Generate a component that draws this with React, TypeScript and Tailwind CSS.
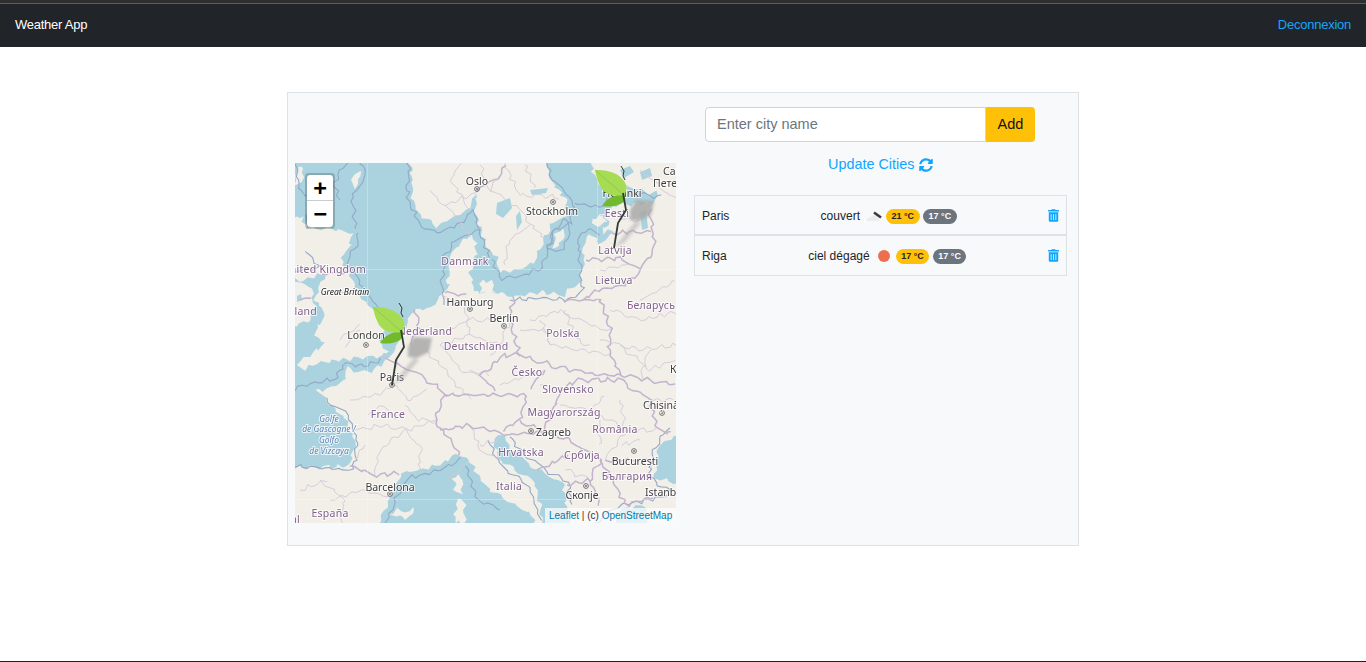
import { FaSyncAlt, FaTrashAlt } from 'react-icons/fa';

const mainland =
  'M280,468 L350,466 L355,443 L345,420 L330,403 L318,392 L313,389 L325,391 L340,383 L345,378 L347,368 L367,373 L380,365 L390,357 L396,345 L401,332 L406,322 L415,310 L432,308 L437,300 L447,290 L450,260 L460,243 L473,235 L477,250 L470,272 L474,292 L497,292 L513,297 L540,292 L563,295 L572,288 L580,285 L584,262 L583,243 L590,233 L600,245 L607,240 L612,233 L606,218 L613,205 L653,203 L657,192 L650,193 L630,187 L603,193 L593,173 L587,150 L690,150 L690,540 L280,540 Z';

const scandinavia =
  'M410,150 L413,200 L423,218 L437,226 L457,217 L472,203 L476,192 L476,215 L487,245 L497,258 L499,272 L520,270 L535,262 L543,240 L550,225 L564,218 L568,204 L560,192 L550,177 L543,150 Z';

const britain =
  'M280,222 L303,216 L306,228 L333,229 L352,233 L351,245 L340,260 L349,272 L358,291 L372,309 L378,318 L384,332 L378,341 L388,350 L380,356 L367,357 L340,360 L315,363 L304,369 L298,364 L312,352 L325,345 L315,335 L318,325 L325,320 L322,310 L315,300 L318,290 L325,280 L322,274 L305,280 L280,278 Z';

const waters = [
  'M373,540 L390,497 L403,473 L420,470 L443,463 L460,453 L470,463 L482,482 L500,497 L530,512 L540,540 Z',
  'M505,435 L510,447 L537,470 L563,483 L567,507 L572,540 L545,540 L540,505 L533,480 L500,460 L493,437 Z',
  'M613,540 L620,510 L645,505 L650,540 Z',
  'M690,433 L665,440 L657,453 L655,477 L690,487 Z',
];

const islands = [
  'M280,284 L305,283 L312,290 L314,305 L310,320 L280,330 Z',
  'M458,473 L463,480 L461,496 L456,494 L454,480 Z',
  'M457,499 L464,500 L465,522 L455,523 Z',
  'M391,514 L398,510 L404,512 L412,509 L414,515 L404,519 Z',
  'M480,283 L492,280 L495,292 L482,292 Z',
  'M553,247 L556,235 L563,226 L565,232 L560,247 Z',
  'M592,219 L604,214 L606,222 L596,226 Z',
  'M352,178 L360,170 L361,178 L354,188 Z',
  'M297,167 L303,170 L301,182 L295,186 Z',
  'M604,228 L612,224 L611,230 L604,233 Z',
];

const lakes = [
  'M497,203 L510,198 L512,208 L503,218 L496,214 Z',
  'M516,216 L520,211 L522,222 L517,230 Z',
  'M530,190 L548,188 L546,193 L532,195 Z',
  'M620,170 L630,166 L634,172 L624,178 Z',
  'M640,172 L650,168 L652,176 L642,180 Z',
  'M640,212 L646,210 L648,228 L642,230 Z',
  'M297,296 L301,294 L302,300 L297,302 Z',
];

const countryBorders = [
  'M350,466 L375,475 L400,473',
  'M385,358 L410,370 L435,385 L445,395',
  'M445,395 L435,420 L440,430 L450,440 L460,453',
  'M440,430 L470,425 L495,432 L505,435',
  'M513,297 L510,320 L520,355',
  'M520,355 L505,355 L480,375 L495,392',
  'M445,395 L495,395 L527,395 L520,420 L505,430',
  'M415,310 L420,330 L410,345',
  'M445,293 L465,295',
  'M563,300 L600,300 L610,330 L610,355 L620,375',
  'M520,355 L560,368 L600,375 L620,375',
  'M545,370 L530,390',
  'M560,390 L580,380 L620,380 L650,400 L657,430 L673,433',
  'M605,460 L640,460 L655,460',
  'M545,432 L570,440 L600,460 L590,480 L565,485',
  'M520,420 L545,432 L560,390',
  'M505,435 L545,432',
  'M537,470 L570,455',
  'M586,260 L620,258 L640,270',
  'M583,300 L600,290 L625,285 L640,270 L655,250 L650,210',
  'M612,233 L630,232 L650,232',
  'M476,192 L500,175 L505,163',
  'M620,375 L676,385',
  'M600,460 L625,505 L655,497',
  'M590,480 L600,505',
  'M322,274 L349,272',
  'M300,300 L312,297',
];

const thinBorders = [
  'M350,400 L375,395 L392,385 L412,400 L425,390',
  'M355,430 L385,425 L405,430 L435,420',
  'M375,475 L380,450 L405,430 L420,445 L420,470',
  'M392,385 L396,360',
  'M330,500 L360,490 L390,497',
  'M320,480 L345,500 L340,523',
  'M440,345 L470,335 L500,345 L510,320',
  'M440,345 L460,370 L480,375',
  'M470,335 L465,305',
  'M530,320 L560,310 L590,325 L610,330',
  'M540,320 L550,345 L580,350 L610,355',
  'M500,385 L545,370',
  'M430,280 L450,300',
  'M445,205 L470,235',
  'M490,190 L520,210 L545,240',
  'M505,163 L520,195 L560,197',
  'M600,175 L630,187',
  'M640,170 L676,200',
  'M600,340 L640,350 L676,345',
  'M640,300 L676,280',
  'M620,400 L625,430 L605,460',
  'M590,410 L625,430 L657,430',
  'M470,425 L480,450 L500,460',
  'M425,350 L445,370 L470,400',
  'M565,470 L590,480',
  'M640,380 L650,350',
  'M340,340 L358,325',
  'M322,295 L358,292',
  'M430,190 L445,205 L476,192',
  'M470,210 L450,180 L460,163',
  'M480,165 L490,190 L500,175',
  'M525,165 L535,190',
  'M530,225 L510,240 L505,265',
  'M490,320 L470,320 L450,330',
  'M490,355 L500,345',
  'M470,370 L490,375',
  'M520,330 L545,330 L550,345',
  'M565,310 L575,340 L590,345',
  'M610,310 L640,320 L676,312',
  'M620,345 L650,370 L676,360',
  'M650,400 L676,400',
  'M560,405 L590,410 L605,395',
  'M540,385 L560,390',
  'M600,420 L600,445',
  'M640,440 L620,445',
  'M620,478 L650,478',
  'M360,330 L345,345',
  'M368,415 L385,405 L395,420',
  'M405,405 L420,420 L435,420',
  'M365,445 L355,460',
  'M300,490 L325,480',
  'M445,480 L470,462',
  'M480,445 L500,440',
  'M600,270 L625,265',
  'M600,215 L640,220',
];

const coastLines = [
  'M410,150 L407,200 L420,225 L437,233 L460,223 L474,210 L480,232 L490,256',
  'M280,392 L312,384 L338,378 L342,364 L366,366 L383,360',
  'M280,465 L352,470 L358,443 L350,418 L325,398',
  'M358,233 L356,246 L346,260 L355,272 L364,291 L378,309 L390,320',
  'M285,272 L318,268 L305,250',
  'M340,200 L333,185 L344,164 L360,160 L366,175 L352,195 L356,230',
  'M295,160 L300,190 L315,200 L306,225',
  'M444,305 L442,285 L445,258 L456,240 L478,230',
  'M543,150 L552,178 L564,192 L574,205 L570,222 L556,230 L548,248 L540,268 L520,276 L502,278 L492,258',
  'M510,300 L540,298 L570,300 L582,290 L580,262 L578,242 L588,228 L600,235',
  'M575,203 L600,208 L606,198 L630,193 L660,197',
  'M385,523 L395,500 L407,478 L422,475 L445,468 L460,458',
  'M500,510 L478,500 L466,465',
  'M488,440 L497,462 L530,487 L541,520',
  'M510,437 L516,447 L542,468 L568,482 L572,505',
  'M595,523 L620,505 L650,500 L670,495',
  'M670,428 L660,440 L652,455 L650,478 L672,492',
  'M548,250 L552,232 L566,219 L570,230 L562,250 Z',
];

const labels = [
  { text: 'Oslo', x: 477, y: 185, kind: 'city' },
  { text: 'Stockholm', x: 552, y: 215, kind: 'city' },
  { text: 'Danmark', x: 465, y: 265, kind: 'country' },
  { text: 'United Kingdom', x: 366, y: 273, kind: 'country', anchor: 'end' },
  { text: 'Great Britain', x: 345, y: 295, kind: 'region' },
  { text: 'Ireland', x: 317, y: 315, kind: 'country', anchor: 'end' },
  { text: 'London', x: 366, y: 339, kind: 'city' },
  { text: 'Nederland', x: 425, y: 335, kind: 'country' },
  { text: 'Hamburg', x: 470, y: 306, kind: 'city' },
  { text: 'Berlin', x: 504, y: 322, kind: 'city' },
  { text: 'Deutschland', x: 476, y: 350, kind: 'country' },
  { text: 'Polska', x: 563, y: 337, kind: 'country' },
  { text: 'Helsinki', x: 622, y: 197, kind: 'city' },
  { text: 'Eesti', x: 617, y: 217, kind: 'country' },
  { text: 'Latvija', x: 615, y: 254, kind: 'country' },
  { text: 'Lietuva', x: 614, y: 284, kind: 'country' },
  { text: 'Беларусь', x: 651, y: 309, kind: 'country' },
  { text: 'Санкт-', x: 663, y: 175, kind: 'city', anchor: 'start' },
  { text: 'Петербург', x: 653, y: 187, kind: 'city', anchor: 'start' },
  { text: 'Paris', x: 392, y: 381, kind: 'city' },
  { text: 'France', x: 388, y: 418, kind: 'country' },
  { text: 'Golfe', x: 329, y: 422, kind: 'sea' },
  { text: 'de Gascogne /', x: 329, y: 432, kind: 'sea' },
  { text: 'Golfo', x: 329, y: 443, kind: 'sea' },
  { text: 'de Vizcaya', x: 329, y: 454, kind: 'sea' },
  { text: 'Barcelona', x: 390, y: 491, kind: 'city' },
  { text: 'España', x: 330, y: 517, kind: 'country' },
  { text: 'Portugal', x: 300, y: 523, kind: 'country', anchor: 'end' },
  { text: 'Česko', x: 527, y: 376, kind: 'country' },
  { text: 'Slovensko', x: 568, y: 393, kind: 'country' },
  { text: 'Magyarország', x: 564, y: 416, kind: 'country' },
  { text: 'Zagreb', x: 536, y: 436, kind: 'city', anchor: 'start' },
  { text: 'Hrvatska', x: 521, y: 456, kind: 'country' },
  { text: 'România', x: 615, y: 433, kind: 'country' },
  { text: 'Србија', x: 582, y: 459, kind: 'country' },
  { text: 'București', x: 635, y: 465, kind: 'city' },
  { text: 'България', x: 627, y: 480, kind: 'country' },
  { text: 'Italia', x: 509, y: 490, kind: 'country' },
  { text: 'Скопје', x: 582, y: 499, kind: 'city' },
  { text: 'Istanbul', x: 645, y: 496, kind: 'city', anchor: 'start' },
  { text: 'Chișinău', x: 643, y: 409, kind: 'city', anchor: 'start' },
  { text: 'Київ', x: 670, y: 373, kind: 'city', anchor: 'start' },
];

const cityDots = [
  [477, 189], [553, 202], [470, 309], [504, 326], [366, 345], [392, 385],
  [531, 431], [634, 451], [586, 486], [662, 413], [390, 494],
];

const labelClasses: Record<string, string> = {
  city: 'fill-[#3d3d3d] text-[10.5px]',
  country: 'fill-[#80608c] text-[10.5px] tracking-[0.25px]',
  region: 'fill-[#222222] text-[8.5px] italic',
  sea: 'fill-[#5f84b5] text-[8.5px] italic',
};

// displace points by their position so shared coasts stay together but stop looking straight
function wiggle(d: string) {
  const points = [...d.matchAll(/(-?[\d.]+),(-?[\d.]+)/g)].map((m) => [Number(m[1]), Number(m[2])]);
  if (d.trim().endsWith('Z')) points.push(points[0]);
  const out: string[] = [];
  points.forEach(([x, y], i) => {
    if (i === 0) {
      out.push(`M${x},${y}`);
      return;
    }
    const [px, py] = points[i - 1];
    const steps = Math.max(1, Math.round(Math.hypot(x - px, y - py) / 4));
    for (let s = 1; s <= steps; s++) {
      const ax = px + ((x - px) * s) / steps;
      const ay = py + ((y - py) * s) / steps;
      const ox = 1.7 * Math.sin(ay * 0.53 + ax * 0.17) + 0.9 * Math.sin(ay * 1.3 - ax * 0.7);
      const oy = 1.7 * Math.sin(ax * 0.47 - ay * 0.21) + 0.9 * Math.sin(ax * 1.1 + ay * 0.8);
      out.push(`L${(ax + ox).toFixed(1)},${(ay + oy).toFixed(1)}`);
    }
  });
  return out.join(' ');
}

function Marker({ dx = 0, dy = 0 }: { dx?: number; dy?: number }) {
  return (
    <g transform={`translate(${dx} ${dy})`}>
      <g className="blur-[1.5px]">
        <path d="M408,347 L414,337 L432,338 L429,352 L417,358 L408,357 Z" fill="#a8a8a8" opacity="0.85" />
        <path d="M393,384 L408,365 L414,358 L419,360 L402,380 Z" fill="#aaaaaa" opacity="0.5" />
      </g>
      <path d="M399,303 L402,308 L401,313 L403,317" fill="none" stroke="#2f3a34" strokeWidth="1" />
      <path d="M380,343 C384,336 392,332 402,330 C404,335 402,340 398,341 C392,344 386,344 380,343 Z" fill="#72b92e" />
      <path d="M373,307 C382,307 395,308 401,317 C405,321 406,327 402,332 C394,333 384,334 378,323 C375,317 374,312 373,307 Z" fill="#a5dc54" />
      <path d="M373,307 L402,332" stroke="#8cc63f" strokeWidth="0.8" fill="none" />
      <path d="M401,330 L404,347 L396,360 L392,385" fill="none" stroke="#333b38" strokeWidth="1.8" />
    </g>
  );
}

function MapView() {
  return (
    <div className="relative w-[381px] h-[360px] overflow-hidden bg-[#f2efe9] shrink-0">
      <svg viewBox="295 163 381 360" width="381" height="360" className="block blur-[0.4px] font-['Noto_Sans',sans-serif]">
        <rect x="280" y="150" width="410" height="390" fill="#aad3df" />
        <path d={wiggle(mainland)} fill="#f2efe9" />
        <path d={wiggle(scandinavia)} fill="#f2efe9" />
        <path d={wiggle(britain)} fill="#f2efe9" />
        {waters.map((d) => (
          <path key={d} d={wiggle(d)} fill="#aad3df" />
        ))}
        {islands.map((d) => (
          <path key={d} d={wiggle(d)} fill="#f2efe9" />
        ))}
        {lakes.map((d) => (
          <path key={d} d={d} fill="#aad3df" />
        ))}
        {coastLines.map((d) => (
          <path key={d} d={wiggle(d)} fill="none" stroke="#93a9c6" strokeWidth="1.1" />
        ))}
        {thinBorders.map((d) => (
          <path key={d} d={wiggle(d)} fill="none" stroke="#d3c8d6" strokeWidth="0.9" />
        ))}
        {countryBorders.map((d) => (
          <path key={d} d={wiggle(d)} fill="none" stroke="#c3b3cd" strokeWidth="1.5" />
        ))}
        <g stroke="#ffffff" strokeOpacity="0.28" strokeWidth="1">
          <path d="M367.5,163 V523" />
          <path d="M597.5,163 V523" />
          <path d="M295,269.5 H676" />
          <path d="M295,499.5 H676" />
        </g>
        {cityDots.map(([x, y]) => (
          <g key={`${x}-${y}`}>
            <circle cx={x} cy={y} r="2.4" fill="none" stroke="#666666" strokeWidth="0.9" />
            <circle cx={x} cy={y} r="0.9" fill="#666666" />
          </g>
        ))}
        {labels.map((l) => (
          <text
            key={l.text}
            x={l.x}
            y={l.y}
            textAnchor={l.anchor ?? 'middle'}
            stroke="#ffffff"
            strokeOpacity="0.75"
            strokeWidth="2"
            paintOrder="stroke"
            className={labelClasses[l.kind]}
          >
            {l.text}
          </text>
        ))}
        <Marker />
        <Marker dx={222} dy={-137} />
      </svg>

      <div className="absolute left-[10px] top-[10px] w-[30px] border-2 border-black/20 rounded bg-clip-padding">
        <div className="h-[26px] bg-white rounded-t-sm border-b border-[#cccccc] flex items-center justify-center font-bold text-[22px] leading-none text-black font-['DejaVu_Sans_Mono',monospace]">
          +
        </div>
        <div className="h-[26px] bg-white rounded-b-sm flex items-center justify-center font-bold text-[22px] leading-none text-black font-['DejaVu_Sans_Mono',monospace]">
          −
        </div>
      </div>

      <div className="absolute right-0 bottom-0 h-[15px] w-[131px] pl-[4px] bg-white/70 text-[10px] leading-[15px] text-[#333333] whitespace-nowrap">
        <span className="text-[#0078a8]">Leaflet</span> | (c) <span className="text-[#0078a8]">OpenStreetMap</span>
      </div>
    </div>
  );
}

function CloudIcon() {
  return (
    <svg viewBox="0 0 17 11" className="w-[17px] h-[11px] blur-[0.3px]">
      <path d="M1,10 C0,7 4,6 5,6 C7,3 11,4 13,8 L13,10 Z" fill="#ececec" />
      <path d="M8,1.5 L15,6.5" stroke="#3a3a3a" strokeWidth="2.6" />
    </svg>
  );
}

const cities = [
  { name: 'Paris', weather: 'couvert', temp: '21 °C', feels: '17 °C', clear: false },
  { name: 'Riga', weather: 'ciel dégagé', temp: '17 °C', feels: '17 °C', clear: true },
];

function CityRow({ city }: { city: (typeof cities)[number] }) {
  return (
    <div className="flex items-center justify-between h-[40px] last:h-[41px] pt-[2px] last:pt-px px-[7px] border border-[#dee2e6] text-[12px] text-[#212529]">
      <span>{city.name}</span>
      <div className="flex items-center">
        <span>{city.weather}</span>
        <span className="w-[26px] pl-[3px] flex justify-center">
          {city.clear ? <span className="w-3 h-3 rounded-full bg-[#ee6e52] blur-[0.4px]" /> : <CloudIcon />}
        </span>
        <span className="h-[15px] px-[5.5px] rounded-full bg-[#ffc107] text-[9px] font-bold leading-[15px] text-[#212529]">{city.temp}</span>
        <span className="ml-[3.5px] h-[15px] px-[5.5px] rounded-full bg-[#6c757d] text-[9px] font-bold leading-[15px] text-white">{city.feels}</span>
      </div>
      <FaTrashAlt className="w-[11px] h-[13px] -mt-[2px] text-[#11a5ff]" />
    </div>
  );
}

export default function App() {
  return (
    <div className="min-h-[662px] flex flex-col bg-white font-['Liberation_Sans',sans-serif]">
      <div className="h-[3px] bg-[#2e2e2e]" />
      <div className="h-px bg-[#5c5c5c]" />
      <nav className="h-[43px] pb-[2px] bg-[#212529] flex items-center justify-between px-[15px] text-[13px] tracking-[-0.25px]">
        <span className="text-white">Weather App</span>
        <a href="#logout" className="text-[#11a5ff]">Deconnexion</a>
      </nav>

      <main className="mt-[45px] mx-auto w-[792px] h-[454px] border border-[#dee2e6] bg-[#f8f9fa] flex">
        <div className="pl-[7px] pt-[70px]">
          <MapView />
        </div>
        <div className="ml-[18px] w-[373px] pt-[14px]">
          <div className="ml-[11px] w-[330px] flex h-[35px] text-[14.5px]">
            <input
              placeholder="Enter city name"
              className="flex-1 min-w-0 px-[11px] bg-white border border-[#ced4da] rounded-l placeholder:text-[#6c757d] outline-none"
            />
            <button className="w-[49px] bg-[#ffc107] rounded-r text-[#111111]">Add</button>
          </div>
          <div className="mt-[14px] ml-[134px] flex items-center h-[18px] text-[14.4px] text-[#11a5ff]">
            <span>Update Cities</span>
            <FaSyncAlt className="ml-[5px] w-[14px] h-[14px]" />
          </div>
          <div className="mt-[21px]">
            {cities.map((c) => (
              <CityRow key={c.name} city={c} />
            ))}
          </div>
        </div>
      </main>

      <div className="mt-auto h-px bg-[#222222]" />
    </div>
  );
}
